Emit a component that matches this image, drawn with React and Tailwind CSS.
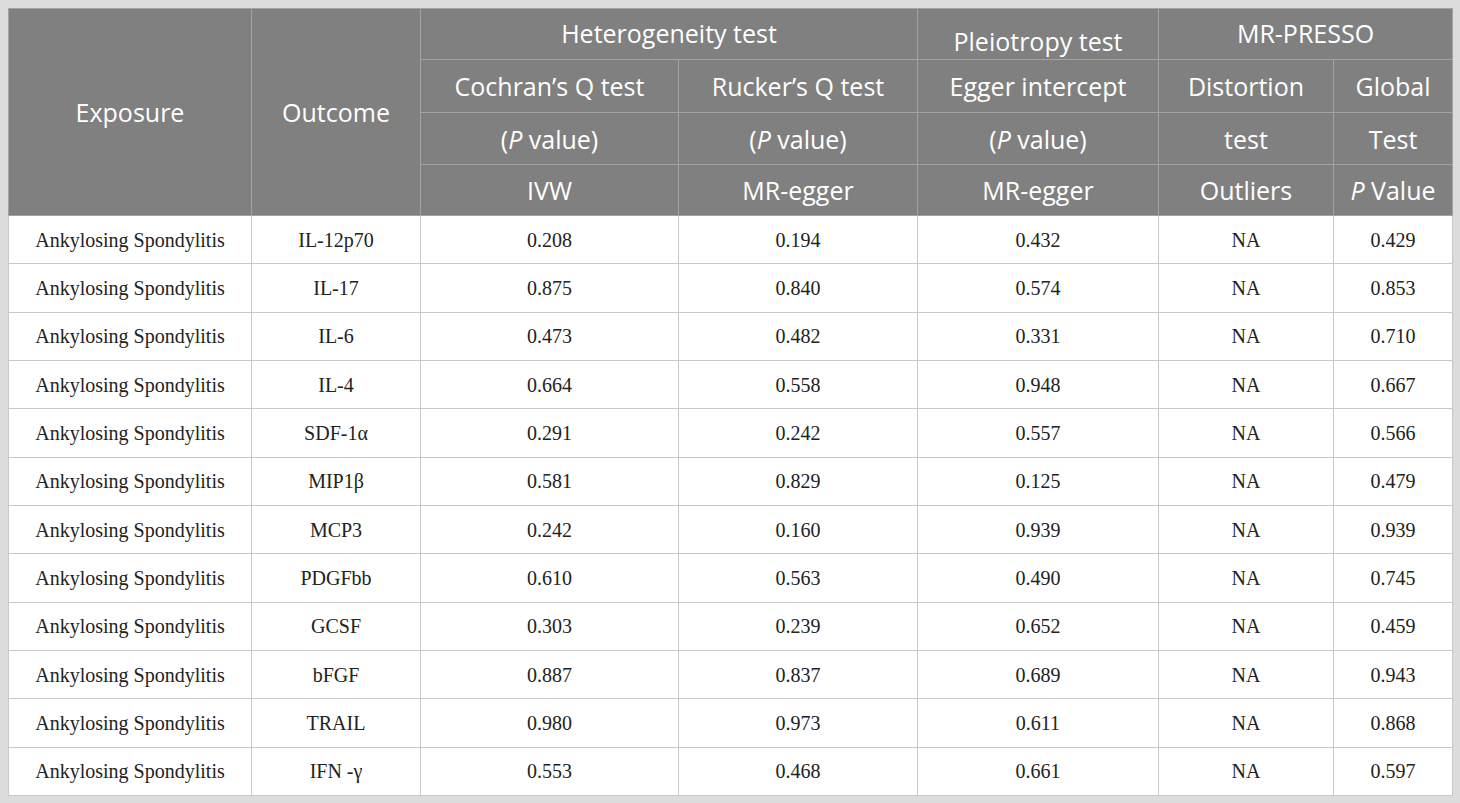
import React from 'react';

const rows = [
	['IL-12p70', '0.208', '0.194', '0.432', 'NA', '0.429'],
	['IL-17', '0.875', '0.840', '0.574', 'NA', '0.853'],
	['IL-6', '0.473', '0.482', '0.331', 'NA', '0.710'],
	['IL-4', '0.664', '0.558', '0.948', 'NA', '0.667'],
	['SDF-1α', '0.291', '0.242', '0.557', 'NA', '0.566'],
	['MIP1β', '0.581', '0.829', '0.125', 'NA', '0.479'],
	['MCP3', '0.242', '0.160', '0.939', 'NA', '0.939'],
	['PDGFbb', '0.610', '0.563', '0.490', 'NA', '0.745'],
	['GCSF', '0.303', '0.239', '0.652', 'NA', '0.459'],
	['bFGF', '0.887', '0.837', '0.689', 'NA', '0.943'],
	['TRAIL', '0.980', '0.973', '0.611', 'NA', '0.868'],
	['IFN -γ', '0.553', '0.468', '0.661', 'NA', '0.597'],
];

const th = 'border border-[#a3a3a3] text-center align-middle font-normal p-0';
const td = 'border border-[#c9c9c9] text-center align-middle p-0';

const App = () => {
	return (
		<div className="w-[1460px] h-[803px] bg-[#dcdcdc] pt-[8px] pl-[8px]">
			<table className="table-fixed border-collapse bg-white w-[1444px] text-[#222]">
				<colgroup>
					<col className="w-[243px]" />
					<col className="w-[169px]" />
					<col className="w-[258px]" />
					<col className="w-[239px]" />
					<col className="w-[241px]" />
					<col className="w-[175px]" />
					<col className="w-[119px]" />
				</colgroup>
				<thead className="bg-[#808080] text-white text-[25px] leading-[30px] font-['Open_Sans',sans-serif]">
					<tr className="h-[51px]">
						<th rowSpan={4} className={th}>Exposure</th>
						<th rowSpan={4} className={th}>Outcome</th>
						<th colSpan={2} className={th + ' pb-[3px]'}>Heterogeneity test</th>
						<th className={th + ' pt-[14px] leading-[26px]'}>Pleiotropy test</th>
						<th colSpan={2} className={th + ' pb-[3px]'}>MR-PRESSO</th>
					</tr>
					<tr className="h-[53px]">
						<th className={th}>Cochran’s Q test</th>
						<th className={th}>Rucker’s Q test</th>
						<th className={th}>Egger intercept</th>
						<th className={th}>Distortion</th>
						<th className={th}>Global</th>
					</tr>
					<tr className="h-[52px]">
						<th className={th}>(<i>P</i> value)</th>
						<th className={th}>(<i>P</i> value)</th>
						<th className={th}>(<i>P</i> value)</th>
						<th className={th}>test</th>
						<th className={th}>Test</th>
					</tr>
					<tr className="h-[51px]">
						<th className={th}>IVW</th>
						<th className={th}>MR-egger</th>
						<th className={th}>MR-egger</th>
						<th className={th}>Outliers</th>
						<th className={th}><i>P</i> Value</th>
					</tr>
				</thead>
				<tbody className="text-[20px] font-['Liberation_Serif',serif]">
					{rows.map((r, i) => (
						<tr key={i} className="h-[48.33px]">
							<td className={td}>Ankylosing Spondylitis</td>
							{r.map((v, j) => (
								<td key={j} className={td}>{v}</td>
							))}
						</tr>
					))}
				</tbody>
			</table>
		</div>
	);
};
export default App;
